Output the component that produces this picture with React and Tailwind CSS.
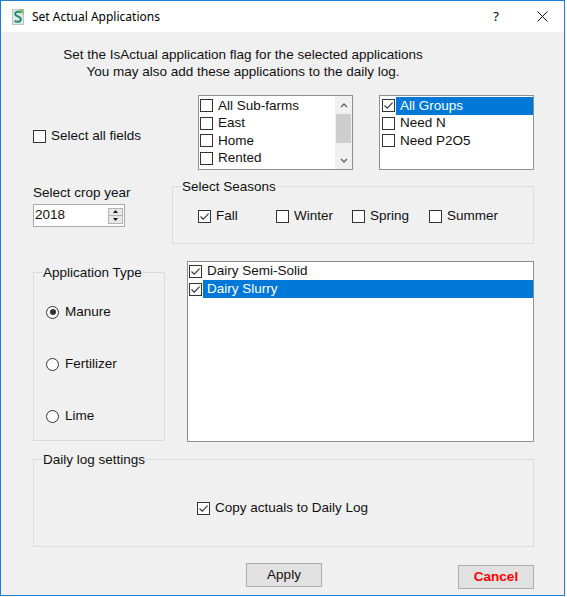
import React from "react";

function Box({ checked }) {
  return (
    <span className="w-[13px] h-[13px] shrink-0 border border-[#333] bg-white flex items-center justify-center">
      {checked && (
        <svg width="11" height="11" viewBox="0 0 11 11">
          <path d="M1.5 5.5 L4.2 8.2 L9.6 2.6" fill="none" stroke="#333" strokeWidth="1.1" />
        </svg>
      )}
    </span>
  );
}

function Radio({ checked }) {
  return (
    <span className="w-[13px] h-[13px] shrink-0 rounded-full border border-[#333] bg-white flex items-center justify-center">
      {checked && <span className="w-[6px] h-[6px] rounded-full bg-[#333]" />}
    </span>
  );
}

function ListItem({ label, checked, selected, tall }) {
  return (
    <div className={`flex items-center ${tall ? "h-[18px]" : "h-[17.5px]"}`}>
      <Box checked={checked} />
      <span
        className={`ml-px pl-[4px] h-full flex-1 flex items-center whitespace-nowrap ${
          selected ? "bg-[#0078d7] text-white" : ""
        }`}
      >
        {label}
      </span>
    </div>
  );
}

function Chevron({ down }) {
  return (
    <svg width="8" height="5" viewBox="0 0 8 5">
      <path
        d={down ? "M1 1 L4 4 L7 1" : "M1 4 L4 1 L7 4"}
        fill="none"
        stroke="#606060"
        strokeWidth="1.3"
      />
    </svg>
  );
}

function Season({ label, checked, width }) {
  return (
    <div className={`flex items-center h-[18px] ${width}`}>
      <Box checked={checked} />
      <span className="ml-[5px]">{label}</span>
    </div>
  );
}

function AppIcon() {
  return (
    <svg width="12" height="16" viewBox="0 0 12 16">
      <rect x="0.5" y="0.5" width="11" height="15" fill="#dfe8e3" stroke="#b9c6c1" />
      <path d="M7 0.5 L11.5 0.5 L11.5 6 Z" fill="#7fc24a" />
      <path
        d="M9 3.5 C7 2 3 2.5 3.2 5.2 C3.4 7.6 9 7.4 8.8 10.4 C8.6 13.2 4.4 13.4 2.6 11.8"
        fill="none"
        stroke="#2a8a78"
        strokeWidth="2"
      />
    </svg>
  );
}

export default function App() {
  return (
    <div className="w-[567px] h-[597px] bg-white">
      <div className="w-[565px] h-[596px] border border-[#1a7fd4] bg-[#f0f0f0] flex flex-col overflow-hidden">
        {/* Title bar */}
        <div className="h-[31px] bg-white flex items-center shrink-0 font-['Noto_Sans',sans-serif] text-[12px] text-black">
          <span className="ml-[11px] flex">
            <AppIcon />
          </span>
          <span className="ml-[8px]">Set Actual Applications</span>
          <span className="ml-auto text-[13px]">?</span>
          <span className="ml-[38px] mr-[16px] flex">
            <svg width="11" height="11" viewBox="0 0 11 11">
              <path d="M0.5 0.5 L10.5 10.5 M10.5 0.5 L0.5 10.5" stroke="#111" strokeWidth="1" />
            </svg>
          </span>
        </div>

        {/* Body */}
        <div className="flex flex-col text-[13.5px] text-[#111] font-['Liberation_Sans',Arial,sans-serif]">
          <div className="w-[484px] mt-[14px] text-center leading-[17px]">
            <p>Set the IsActual application flag for the selected applications</p>
            <p>You may also add these applications to the daily log.</p>
          </div>

          {/* Fields row */}
          <div className="flex items-start mt-[15px] ml-[32px]">
            <div className="w-[165px] mt-[32px] flex items-center h-[18px]">
              <Box />
              <span className="ml-[5px]">Select all fields</span>
            </div>
            <div className="w-[155px] h-[75px] border border-[#8e8f8f] bg-white flex">
              <div className="flex-1 pl-px pt-px">
                <ListItem label="All Sub-farms" />
                <ListItem label="East" />
                <ListItem label="Home" />
                <ListItem label="Rented" />
              </div>
              <div className="w-[17px] bg-[#f0f0f0] flex flex-col">
                <div className="h-[18px] flex items-center justify-center">
                  <Chevron />
                </div>
                <div className="mx-px h-[29px] bg-[#cdcdcd]" />
                <div className="flex-1" />
                <div className="h-[18px] flex items-center justify-center">
                  <Chevron down />
                </div>
              </div>
            </div>
            <div className="ml-[26px] w-[155px] h-[75px] border border-[#8e8f8f] bg-white pl-[2px] pt-px">
              <ListItem label="All Groups" checked selected />
              <ListItem label="Need N" />
              <ListItem label="Need P2O5" />
            </div>
          </div>

          {/* Crop year + seasons */}
          <div className="flex items-start mt-[8px] ml-[32px]">
            <div className="w-[139px] pt-[6px]">
              <p className="leading-[17px]">Select crop year</p>
              <div className="mt-[3px] w-[92px] h-[23px] border border-[#a9a9a9] bg-white flex items-center">
                <span className="pl-px flex-1">2018</span>
                <div className="mr-px w-[15px] flex flex-col">
                  <div className="h-[8px] border border-[#b4b4b4] bg-[#e8e8e8] flex items-center justify-center">
                    <svg width="5" height="3" viewBox="0 0 5 3">
                      <path d="M0 3 L2.5 0 L5 3 Z" fill="#111" />
                    </svg>
                  </div>
                  <div className="h-[8px] border border-t-0 border-[#b4b4b4] bg-[#e8e8e8] flex items-center justify-center">
                    <svg width="5" height="3" viewBox="0 0 5 3">
                      <path d="M0 0 L2.5 3 L5 0 Z" fill="#111" />
                    </svg>
                  </div>
                </div>
              </div>
            </div>
            <fieldset className="w-[362px] h-[66px] border border-[#dcdcdc] pl-[8px]">
              <legend className="px-px leading-[17px]">Select Seasons</legend>
              <div className="flex mt-[12px] ml-[17px]">
                <Season label="Fall" checked width="w-[78px]" />
                <Season label="Winter" width="w-[76px]" />
                <Season label="Spring" width="w-[77px]" />
                <Season label="Summer" width="w-[80px]" />
              </div>
            </fieldset>
          </div>

          {/* Application type + products */}
          <div className="flex items-start mt-[17px] ml-[32px]">
            <fieldset className="mt-[3px] w-[132px] h-[177px] border border-[#dcdcdc] pl-[8px]">
              <legend className="px-px leading-[17px]">Application Type</legend>
              <div className="ml-[4px] mt-[22px] flex flex-col gap-[34px]">
                <div className="flex items-center h-[18px]">
                  <Radio checked />
                  <span className="ml-[6px]">Manure</span>
                </div>
                <div className="flex items-center h-[18px]">
                  <Radio />
                  <span className="ml-[6px]">Fertilizer</span>
                </div>
                <div className="flex items-center h-[18px]">
                  <Radio />
                  <span className="ml-[6px]">Lime</span>
                </div>
              </div>
            </fieldset>
            <div className="ml-[22px] w-[347px] h-[181px] border border-[#8e8f8f] bg-white pl-px">
              <ListItem label="Dairy Semi-Solid" checked tall />
              <ListItem label="Dairy Slurry" checked selected tall />
            </div>
          </div>

          {/* Daily log */}
          <fieldset className="mt-[9px] ml-[32px] w-[501px] h-[96px] border border-[#dcdcdc] pl-[8px]">
            <legend className="px-px leading-[17px]">Daily log settings</legend>
            <div className="mt-[31px] ml-[155px] flex items-center h-[18px]">
              <Box checked />
              <span className="ml-[5px]">Copy actuals to Daily Log</span>
            </div>
          </fieldset>

          {/* Buttons */}
          <div className="flex items-start mt-[16px]">
            <button className="ml-[245px] w-[76px] h-[24px] border border-[#adadad] bg-[#e1e1e1] flex items-center justify-center">
              Apply
            </button>
            <button className="ml-[136px] mt-[2px] w-[76px] h-[24px] border border-[#adadad] bg-[#e1e1e1] flex items-center justify-center text-[#ff0000] font-bold">
              Cancel
            </button>
          </div>
        </div>
      </div>
    </div>
  );
}
